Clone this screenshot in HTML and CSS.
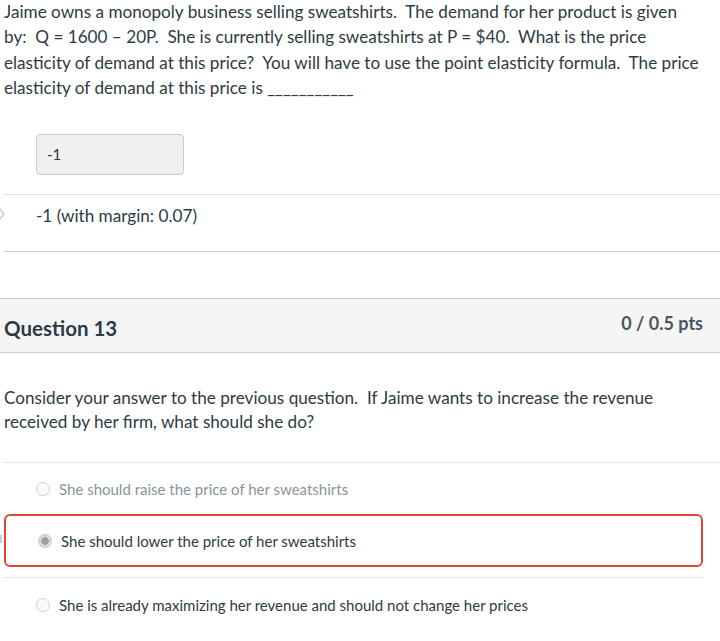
FILE: index.html
```html
<!DOCTYPE html>
<html>
<head>
<meta charset="utf-8">
<link rel="stylesheet" href="styles.css">
</head>
<body>
<div class="page">
  <section class="prev">
    <p class="qtext">Jaime owns a monopoly business selling sweatshirts.&nbsp; The demand for her product is given<br>by:&nbsp; Q = 1600 &ndash; 20P.&nbsp; She is currently selling sweatshirts at P = $40.&nbsp; What is the price<br>elasticity of demand at this price?&nbsp; You will have to use the point elasticity formula.&nbsp; The price<br>elasticity of demand at this price is ___________</p>
    <div class="answer-box">-1</div>
    <div class="correct-row">
      <svg class="arrow" width="10" height="22" viewBox="0 0 10 22"><polygon points="-6,2 1,2 8,11 1,20 -6,20" fill="#fff" stroke="#c7cdd1" stroke-width="1.5"/></svg>
      <span>-1 (with margin: 0.07)</span>
    </div>
  </section>

  <section class="question">
    <header class="qhead">
      <h2>Question 13</h2>
      <span class="pts">0 / 0.5 pts</span>
    </header>
    <p class="qbody">Consider your answer to the previous question.&nbsp; If Jaime wants to increase the revenue<br>received by her firm, what should she do?</p>
    <div class="options">
      <div class="opt muted"><span class="radio"></span>She should raise the price of her sweatshirts</div>
      <div class="opt selected"><span class="radio checked"></span>She should lower the price of her sweatshirts</div>
      <div class="opt"><span class="radio"></span>She is already maximizing her revenue and should not change her prices</div>
    </div>
  </section>
  <span class="tick"></span>
</div>
</body>
</html>
```

FILE: styles.css
```css
html, body {
  margin: 0;
  padding: 0;
  background: #fff;
}
body {
  font-family: Lato, "Liberation Sans", sans-serif;
  color: #2d3b45;
  overflow: hidden;
}
.page {
  position: relative;
  width: 720px;
  height: 641px;
}
.qtext {
  margin: -1px 0 0 0;
  padding-left: 4px;
  font-size: 17.15px;
  line-height: 25.3px;
}
.answer-box {
  box-sizing: border-box;
  margin: 34px 0 0 36px;
  width: 148px;
  height: 41px;
  background: #f0f0f0;
  border: 1px solid #c9cdd0;
  border-radius: 4px;
  font-size: 15px;
  line-height: 39px;
  padding-left: 10px;
}
.correct-row {
  position: relative;
  margin: 19px 0 0 4px;
  border-top: 1px solid #dfe2e4;
  height: 56px;
  display: flex;
  align-items: center;
  padding-left: 32px;
  font-size: 17.15px;
  border-bottom: 1px solid #c7cdd1;
  margin-left: 4px;
}
.correct-row span {
  margin-top: -15px;
}
.arrow {
  position: absolute;
  left: -8px;
  top: 8px;
}
.question {
  margin-top: 46px;
}
.qhead {
  box-sizing: border-box;
  height: 55px;
  background: #f5f5f5;
  border-top: 1px solid #c7cdd1;
  border-bottom: 1px solid #c7cdd1;
  display: flex;
  align-items: center;
  justify-content: space-between;
  padding: 0 17px 0 4px;
}
.qhead h2 {
  margin: 4px 0 0 0;
  font-size: 20.5px;
  font-weight: 700;
}
.pts {
  font-size: 18px;
  font-weight: 700;
  color: #4a555d;
  margin-top: -6px;
}
.qbody {
  margin: 33px 0 0 0;
  padding-left: 4px;
  font-size: 17.15px;
  line-height: 24px;
}
.options {
  margin: 28px 0 0 4px;
  border-top: 1px solid #e4e6e8;
}
.opt {
  box-sizing: border-box;
  display: flex;
  align-items: center;
  height: 53px;
  padding-left: 32px;
  font-size: 15px;
  margin-right: 17px;
}
.opt .radio {
  box-sizing: border-box;
  width: 14px;
  height: 14px;
  border: 1px solid #cfd3d6;
  border-radius: 50%;
  background: #fafafa;
  margin-right: 9px;
  flex: none;
}
.opt.muted {
  color: #8a949b;
  height: 51px;
}
.opt.selected {
  border: 2px solid #e0453a;
  border-radius: 6px;
  padding-left: 32px;
  margin-bottom: 10px;
}
.radio.checked {
  background: radial-gradient(circle, #9aa0a5 0 3.5px, #d9dcde 4px);
  border-color: #c4c8cb;
}
.options .opt:last-child {
  border-top: 1px solid #e4e6e8;
  height: 54px;
}
.tick {
  position: absolute;
  left: 0;
  top: 536px;
  width: 2px;
  height: 8px;
  background: #c7cdd1;
}
```
